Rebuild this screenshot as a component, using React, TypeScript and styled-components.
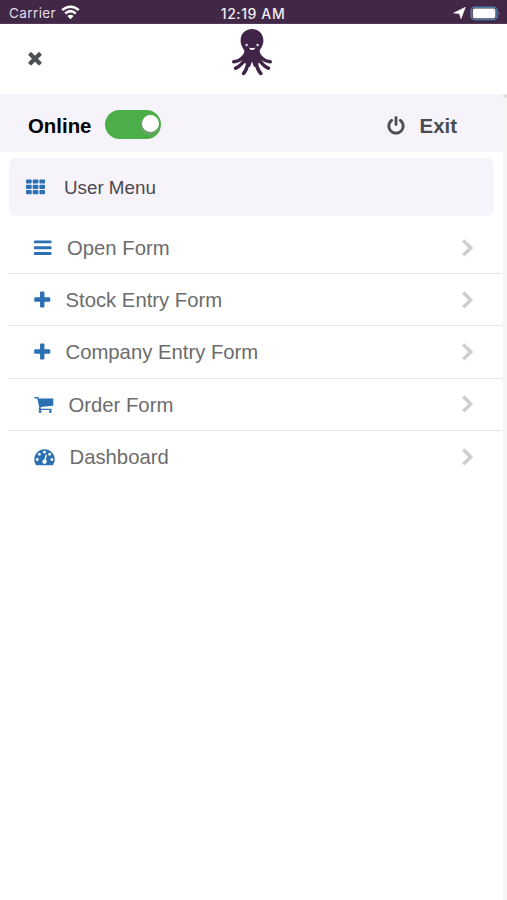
import React from "react";
import styled, { createGlobalStyle } from "styled-components";

const GlobalStyle = createGlobalStyle`
  * { box-sizing: border-box; }
  html, body { margin: 0; background: #fff; }
  body { font-family: "Liberation Sans", Arial, sans-serif; }
`;

const Screen = styled.div`
  display: flex;
  flex-direction: column;
  width: 507px;
  height: 900px;
  overflow: hidden;
  background: #fff;
`;

const StatusBar = styled.header`
  display: grid;
  grid-template-columns: 1fr auto 1fr;
  align-items: center;
  height: 24px;
  padding: 4px 6px 0 9px;
  background: #402846;
  border-bottom: 1px solid #52395a;
  color: #e3dce6;
  font: 400 13.5px/19px Inter, sans-serif;
`;

const Carrier = styled.div`
  display: flex;
  align-items: center;
  gap: 5px;
  letter-spacing: 0.4px;

  svg { margin-bottom: 2px; }
`;

const Clock = styled.div`
  color: #f1edf3;
  font-size: 14px;
  font-weight: 500;
  letter-spacing: 0.6px;
  margin-right: 4px;
`;

const Indicators = styled.div`
  display: flex;
  justify-content: flex-end;
  align-items: center;
  gap: 4px;
  padding-bottom: 1px;
`;

const LogoBar = styled.div`
  display: grid;
  grid-template-columns: 1fr auto 1fr;
  height: 70px;
  padding: 4px 5px 0 25px;
`;

const CloseButton = styled.button`
  justify-self: start;
  width: 20px;
  height: 20px;
  margin-top: 20px;
  padding: 0;
  border: 0;
  background: none;
  color: #4a5052;
`;

const Logo = styled.svg`
  display: block;
  width: 42px;
  height: 50px;
  margin-right: 23px;
`;

const Body = styled.div`
  display: flex;
  flex: 1;
`;

const Content = styled.main`
  flex: 1;
`;

const ScrollTrack = styled.div`
  width: 4px;
  background: #f6f5f6;
`;

const ScrollThumb = styled.div`
  height: 4px;
  border-radius: 2px;
  background: #dcdadd;
`;

const OnlineBar = styled.section`
  display: flex;
  align-items: center;
  height: 58px;
  padding: 0 46px 0 28px;
  background: #f7f3fa;
  font-size: 20.4px;
  font-weight: 700;
  color: #000;
`;

const OnlineLabel = styled.span`
  padding-top: 7px;
`;

const Toggle = styled.div`
  display: flex;
  justify-content: flex-end;
  align-items: center;
  width: 56px;
  height: 29px;
  margin: 2px 0 0 14px;
  padding: 0 2px 1px;
  border-radius: 15px;
  background: #4cae49;
`;

const Knob = styled.div`
  width: 17px;
  height: 17px;
  border-radius: 50%;
  background: #fff;
  box-shadow: -1px 2px 2px #7d9a7c;
`;

const ExitButton = styled.div`
  display: flex;
  align-items: center;
  gap: 14px;
  margin-left: auto;
  padding-top: 7px;
  color: #484c51;

  svg { margin-bottom: 1px; }
`;

const MenuHeading = styled.h1`
  display: flex;
  align-items: center;
  gap: 19px;
  height: 58px;
  margin: 6px 9px 6px;
  padding: 1px 16px 0 17px;
  border-radius: 7px;
  background: #f7f3fa;
  color: #4b494e;
  font-size: 18.8px;
  font-weight: 400;

  svg { margin-bottom: 2px; }
`;

const List = styled.ul`
  margin: 0 1px 0 8px;
  padding: 0;
  list-style: none;
`;

const Row = styled.li`
  display: flex;
  align-items: center;
  height: 52.2px;
  padding: 0 27px 0 26px;
  border-bottom: 1px solid #e6e6e6;
  color: #6c6c6c;
  font-size: 20.3px;
  &:last-child { border-bottom: 0; }
`;

const RowLabel = styled.span<{ $gap: number }>`
  flex: 1;
  margin-left: ${(p) => p.$gap}px;
  padding-top: 2px;
`;

const Glyph = styled.svg<{ $width?: number; $size?: number }>`
  display: block;
  flex: none;
  width: ${(p) => p.$width ?? 20}px;
  height: ${(p) => p.$size ?? 20}px;
  color: #2a70b2;
  fill: currentColor;
`;

const NeutralGlyph = styled(Glyph)`
  color: #4b5054;
`;

const bars =
  "M1664 1344v128q0 26-19 45t-45 19h-1408q-26 0-45-19t-19-45v-128q0-26 19-45t45-19h1408q26 0 45 19t19 45zm0-512v128q0 26-19 45t-45 19h-1408q-26 0-45-19t-19-45v-128q0-26 19-45t45-19h1408q26 0 45 19t19 45zm0-512v128q0 26-19 45t-45 19h-1408q-26 0-45-19t-19-45v-128q0-26 19-45t45-19h1408q26 0 45 19t19 45z";
const plus =
  "M1600 736v192q0 40-28 68t-68 28h-416v416q0 40-28 68t-68 28h-192q-40 0-68-28t-28-68v-416h-416q-40 0-68-28t-28-68v-192q0-40 28-68t68-28h416v-416q0-40 28-68t68-28h192q40 0 68 28t28 68v416h416q40 0 68 28t28 68z";
const times =
  "M1490 1322q0 40-28 68l-136 136q-28 28-68 28t-68-28l-294-294-294 294q-28 28-68 28t-68-28l-136-136q-28-28-28-68t28-68l294-294-294-294q-28-28-28-68t28-68l136-136q28-28 68-28t68 28l294 294 294-294q28-28 68-28t68 28l136 136q28 28 28 68t-28 68l-294 294 294 294q28 28 28 68z";
const power =
  "M1664 896q0 156-61 298t-164 245-245 164-298 61-298-61-245-164-164-245-61-298q0-182 80.5-343t226.5-270q43-32 95.5-25t83.5 50q32 42 24.5 94.5t-49.5 84.5q-98 74-151.5 181t-53.5 228q0 104 40.5 198.5t109.5 163.5 163.5 109.5 198.5 40.5 198.5-40.5 163.5-109.5 109.5-163.5 40.5-198.5q0-121-53.5-228t-151.5-181q-42-32-49.5-84.5t24.5-94.5q31-43 84-50t95 25q146 109 226.5 270t80.5 343zm-640-768v640q0 52-38 90t-90 38-90-38-38-90v-640q0-52 38-90t90-38 90 38 38 90z";
const cart =
  "M704 1536q0 52-38 90t-90 38-90-38-38-90 38-90 90-38 90 38 38 90zm896 0q0 52-38 90t-90 38-90-38-38-90 38-90 90-38 90 38 38 90zm128-1088v512q0 24-16.5 42.5t-40.5 21.5l-1044 122q13 60 13 70 0 16-24 64h920q26 0 45 19t19 45-19 45-45 19h-1024q-26 0-45-19t-19-45q0-11 8-31.5t16-36 21.5-40 15.5-29.5l-177-823h-204q-26 0-45-19t-19-45 19-45 45-19h256q16 0 28.5 6.5t19.5 15.5 13 24.5 8 26 5.5 29.5 4.5 26h1201q26 0 45 19t19 45z";
const dot = "q0-53-37.5-90.5t-90.5-37.5-90.5 37.5-37.5 90.5 37.5 90.5 90.5 37.5 90.5-37.5 37.5-90.5z";
const gauge =
  "M384 1152" + dot + "m192-448" + dot +
  "m428 481l101-382q6-26-7.5-48.5t-38.5-29.5-48 6.5-30 39.5l-101 382q-60 5-107 43.5t-63 98.5q-20 77 20 146t117 89 146-20 89-117q16-60-6-117t-72-91z" +
  "m660-33" + dot + "m-640-640" + dot + "m448 192" + dot +
  "m320 448q0 261-141 483-19 29-54 29h-1402q-35 0-54-29-141-221-141-483 0-182 71-348t191-286 286-191 348-71 348 71 286 191 191 286 71 348z";

const items = [
  { label: "Open Form", path: bars, box: "128 -40 1536 1792", width: 17.5, gap: 15.5 },
  { label: "Stock Entry Form", path: plus, box: "192 0 1408 1792", width: 16.5, gap: 15 },
  { label: "Company Entry Form", path: plus, box: "192 0 1408 1792", width: 16.5, gap: 15 },
  { label: "Order Form", path: cart, box: "64 0 1664 1792", width: 19.5, gap: 15 },
  { label: "Dashboard", path: gauge, box: "0 64 1792 1792", width: 21, gap: 14.5 },
];

const GridGlyph = () => (
  <Glyph viewBox="0 0 19 20" $width={19} $size={20}>
    {[2.4, 7.7, 13].map((y) =>
      [0, 6.7, 13.4].map((x) => <rect key={`${x}-${y}`} x={x} y={y} width="5.7" height="4.2" rx="1" />)
    )}
  </Glyph>
);

const Octopus = () => (
  <Logo viewBox="0 0 42 50">
    <g fill="none" stroke="#402447" strokeLinecap="round" strokeWidth="3.6">
      <path d="M16 25C13 29 8.500 33.500 2.800 33.800" />
      <path d="M17 27C14 32 10.500 38 4.600 40.200" />
      <path d="M19.500 28C16 34 17.500 40 12.600 45.400" />
      <path d="M26 25C29 29 33.500 33.500 39.200 33.800" />
      <path d="M25 27C28 32 31.500 38 37.400 40.200" />
      <path d="M22.500 28C26 34 24.500 40 29.800 45.400" />
    </g>
    <path
      fill="#402447"
      d="M21 1C14 1 9.600 6 9.600 12.500c0 4.600 2.400 7.200 3.800 10.300-.3 3-2.300 5.500-3.800 7.500L13 33l3 5 3 1 2-5.500 2 5.500 3-1 3-5 3.400-2.700c-1.500-2-3.500-4.500-3.800-7.500 1.400-3.100 3.800-5.700 3.800-10.300C32.400 6 28 1 21 1z"
    />
    <circle cx="15.600" cy="17" r="1.200" fill="#e9e1ec" />
    <circle cx="26.600" cy="17" r="1.200" fill="#e9e1ec" />
    <path d="M18 19.400q3.200 1 6.400 0q-.5 2.600-3.200 2.600t-3.200-2.600z" fill="#fff" />
  </Logo>
);

const Wifi = () => (
  <svg width="19" height="15" viewBox="0 0 19 15">
    <g fill="none" stroke="#fff" strokeWidth="2.500">
      <path d="M1.200 5.200C6 .6 13 .6 17.800 5.200" />
      <path d="M4.200 8.500c3.300-2.900 7.300-2.900 10.600 0" />
    </g>
    <path d="M6.400 10.900q3.100-2.400 6.200 0L9.500 14.200z" fill="#fff" />
  </svg>
);

export default function App() {
  return (
    <>
      <GlobalStyle />
      <Screen>
        <StatusBar>
          <Carrier>
            Carrier <Wifi />
          </Carrier>
          <Clock>12:19 AM</Clock>
          <Indicators>
            <svg width="13" height="12" viewBox="0 0 13 12">
              <path d="M12.400.2L8 11.800 6.400 6.700.6 6z" fill="#fff" stroke="#fff" strokeWidth=".5" strokeLinejoin="round" />
            </svg>
            <svg width="31" height="15" viewBox="0 0 31 15">
              <rect x="1.200" y="1.200" width="25.800" height="12.400" rx="3.500" fill="#402846" stroke="#507ba5" strokeWidth="1.500" />
              <rect x="2.800" y="2.600" width="22.600" height="9.600" rx="1.800" fill="#fff" />
              <path d="M28.600 5.300q2.200 2.100 0 4.200z" fill="#806b88" />
            </svg>
          </Indicators>
        </StatusBar>
        <LogoBar>
          <CloseButton aria-label="Close">
            <NeutralGlyph viewBox="0 0 1792 1792">
              <path d={times} />
            </NeutralGlyph>
          </CloseButton>
          <Octopus />
        </LogoBar>
        <Body>
          <Content>
            <OnlineBar>
              <OnlineLabel>Online</OnlineLabel>
              <Toggle role="switch" aria-checked="true">
                <Knob />
              </Toggle>
              <ExitButton>
                <NeutralGlyph viewBox="0 0 1792 1792">
                  <path d={power} />
                </NeutralGlyph>
                Exit
              </ExitButton>
            </OnlineBar>
            <MenuHeading>
              <GridGlyph />
              User Menu
            </MenuHeading>
            <List>
              {items.map((item) => (
                <Row key={item.label}>
                  <Glyph viewBox={item.box} $width={item.width} $size={20.5}>
                    <path d={item.path} />
                  </Glyph>
                  <RowLabel $gap={item.gap}>{item.label}</RowLabel>
                  <svg width="14" height="20" viewBox="0 0 14 20">
                    <path d="M2.200 2.600L9.800 9.900 2.200 17.200" fill="none" stroke="#cecece" strokeWidth="3.400" />
                  </svg>
                </Row>
              ))}
            </List>
          </Content>
          <ScrollTrack>
            <ScrollThumb />
          </ScrollTrack>
        </Body>
      </Screen>
    </>
  );
}
